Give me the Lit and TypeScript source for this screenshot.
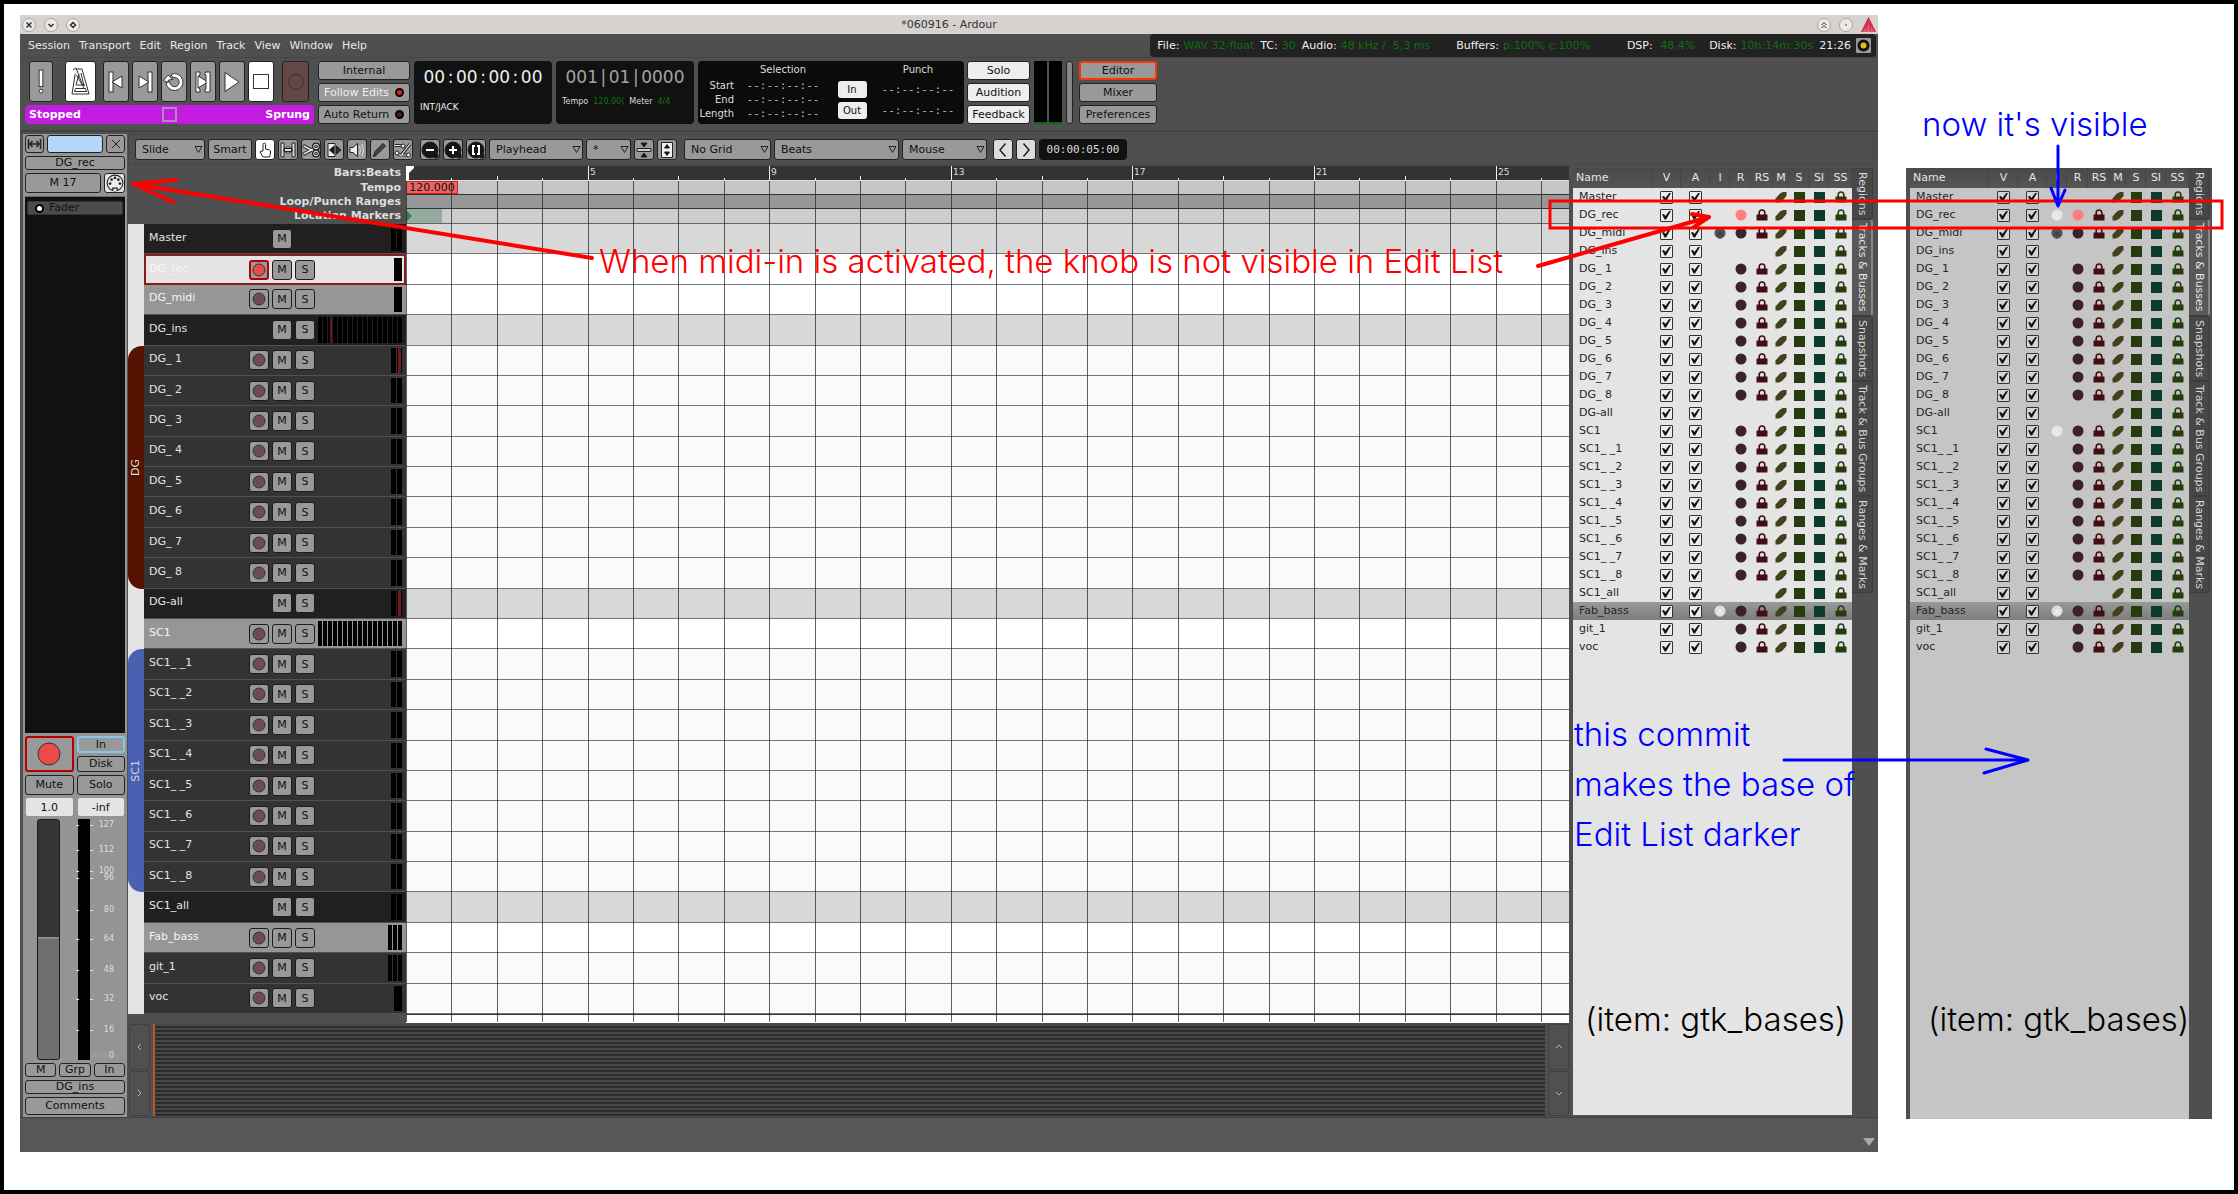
import { LitElement, html, css, svg, nothing } from "lit";
import { customElement, property } from "lit/decorators.js";
import { classMap } from "lit/directives/class-map.js";

type Kind = "bus" | "track" | "selected" | "armed";

interface Track {
  name: string;
  kind: Kind;
  bars: number;
  hot?: number;
  midi?: "light" | "dark";
}

const numbered = (prefix: string): Track[] =>
  Array.from({ length: 8 }, (_, i) => ({ name: `${prefix}${i + 1}`, kind: "track" as Kind, bars: 2 }));

const dgTracks = numbered("DG_ ");
dgTracks[0].hot = 1;

const TRACKS: Track[] = [
  { name: "Master", kind: "bus", bars: 2 },
  { name: "DG_rec", kind: "armed", bars: 1, midi: "light" },
  { name: "DG_midi", kind: "selected", bars: 1, midi: "dark" },
  { name: "DG_ins", kind: "bus", bars: 17, hot: 2 },
  ...dgTracks,
  { name: "DG-all", kind: "bus", bars: 2, hot: 1 },
  { name: "SC1", kind: "selected", bars: 17, midi: "light" },
  ...numbered("SC1_ _"),
  { name: "SC1_all", kind: "bus", bars: 2 },
  { name: "Fab_bass", kind: "selected", bars: 3, midi: "light" },
  { name: "git_1", kind: "track", bars: 3 },
  { name: "voc", kind: "track", bars: 1 },
];

const BAR_WIDTH = 45.4;
const BARS = Array.from({ length: 26 }, (_, i) => i);
const barX = (i: number) => Math.round(i * BAR_WIDTH);

const SCALE: [string, number][] = [
  ["127", 1], ["112", 11], ["100", 20], ["96", 23], ["80", 36],
  ["64", 48], ["48", 61], ["32", 73], ["16", 86],
];

const midiPlug = (body: string, ink: string) => svg`
  <circle cx="8" cy="8" r="7" fill=${body} stroke=${ink}></circle>
  <path d="M6 15v-2.500h4V15" fill=${body} stroke=${ink}></path>
  <g fill=${ink}><circle cx="3.600" cy="8.500" r="1.200"></circle><circle cx="5" cy="5" r="1.200"></circle>
  <circle cx="8" cy="3.500" r="1.200"></circle><circle cx="11" cy="5" r="1.200"></circle>
  <circle cx="12.400" cy="8.500" r="1.200"></circle></g>`;

@customElement("edit-list")
export class EditList extends LitElement {
  @property({ type: Boolean, reflect: true }) dark = false;

  static styles = css`
    :host {
      display: grid;
      grid-template-columns: 279px 1fr;
      box-sizing: border-box;
      padding-left: 4px;
      background: #4f4f4f;
      font: 11px/18px "DejaVu Sans", sans-serif;
      --base: #e4e4e4;
    }
    :host([dark]) { --base: #c5c5c5; }
    .list { background: var(--base); }
    table { border-collapse: collapse; table-layout: fixed; width: 100%; }
    th, td { padding: 0; text-align: center; font-weight: normal; height: 18px; line-height: 16px; }
    th {
      height: 20px;
      color: #e6e6e6;
      background: linear-gradient(#4a4a4a, #555);
      box-shadow: inset -1px 0 #474747;
    }
    th:first-child { text-align: left; padding-left: 3px; }
    td:first-child { text-align: left; padding-left: 6px; white-space: pre; color: #262626; }
    tr.current td { background: linear-gradient(#999, #7d7d7d); }
    .name { width: 79px; } .check { width: 29px; } .in { width: 20px; } .rec { width: 21px; }
    .safe { width: 22px; } .mute { width: 16px; } .solo { width: 20px; } .ss { width: 23px; }
    input {
      appearance: none;
      display: block;
      box-sizing: border-box;
      width: 13px;
      height: 13px;
      margin: 0 auto;
      border: 1px solid #333;
      border-radius: 1px;
      background: #ececec;
    }
    :host([dark]) input { background: #d4d4d4; }
    input:checked::before {
      content: "";
      display: block;
      width: 9px;
      height: 9px;
      margin: 1px;
      background: #111;
      clip-path: polygon(0 45%, 22% 40%, 38% 62%, 85% 0, 100% 5%, 45% 100%, 30% 100%);
    }
    svg { display: block; margin: 0 auto; }
    .tabs { display: flex; flex-direction: column; align-items: flex-start; }
    .tab {
      writing-mode: vertical-rl;
      width: 21px;
      margin: 0;
      padding: 3px 0;
      border: 1px solid #3d3d3d;
      border-left: 0;
      border-radius: 0 3px 3px 0;
      background: #474747;
      color: #d6d6d6;
      font: inherit;
      line-height: 18px;
      text-align: left;
    }
    .tab.active { background: #585858; border-right: 2px solid #888; color: #e6e6e6; }
  `;

  private row(t: Track) {
    const bus = t.kind === "bus";
    return html`<tr class=${t.name === "Fab_bass" ? "current" : ""}>
      <td>${t.name}</td>
      <td><input type="checkbox" checked aria-label="${t.name} visible"></td>
      <td><input type="checkbox" checked aria-label="${t.name} active"></td>
      <td>${t.midi
        ? html`<svg width="12" height="12" viewBox="0 0 16 16">${t.midi === "dark"
            ? midiPlug("#444", "#666")
            : midiPlug(!this.dark && t.name !== "Fab_bass" ? "#e6e6e6" : "#ebebeb", t.name === "Fab_bass" ? "#d0d0d0" : "#e2e2e2")}</svg>`
        : nothing}</td>
      <td>${bus ? nothing : html`<svg width="12" height="12"><circle cx="6" cy="6" r="5.500"
        fill=${t.kind === "armed" ? "#ff7d7d" : "#3b2224"}></circle></svg>`}</td>
      <td>${bus ? nothing : this.lock("#430e12")}</td>
      <td><svg width="12" height="12"><path d="M.5 11.500V7.500L5 2.500l3-1.500h3.500v4L7 10l-3 1.500z" fill="#443f1c"></path></svg></td>
      <td><svg width="11" height="11"><rect width="11" height="11" fill="#273c0e"></rect></svg></td>
      <td><svg width="11" height="11"><rect width="11" height="11" fill="#0c3b2a"></rect></svg></td>
      <td>${this.lock("#273c0e")}</td>
    </tr>`;
  }

  private lock(color: string) {
    return html`<svg width="12" height="12"><path d="M3.200 6V3.800a2.800 2.800 0 0 1 5.600 0V6" fill="none"
      stroke=${color} stroke-width="1.600"></path><rect x=".5" y="5.500" width="11" height="6" fill=${color}></rect></svg>`;
  }

  render() {
    return html`
      <div class="list">
        <table>
          <colgroup>
            <col class="name"><col class="check"><col class="check"><col class="in"><col class="rec">
            <col class="safe"><col class="mute"><col class="solo"><col class="solo"><col class="ss">
          </colgroup>
          <thead><tr>${["Name", "V", "A", "I", "R", "RS", "M", "S", "SI", "SS"].map(
            (h) => html`<th scope="col">${h}</th>`)}</tr></thead>
          <tbody>${TRACKS.map((t) => this.row(t))}</tbody>
        </table>
      </div>
      <nav class="tabs" role="tablist">
        ${["Regions", "Tracks & Busses", "Snapshots", "Track & Bus Groups", "Ranges & Marks"].map(
          (t, i) => html`<button role="tab" aria-selected=${i === 1} class=${classMap({ tab: true, active: i === 1 })}>${t}</button>`)}
      </nav>`;
  }
}

@customElement("track-row")
export class TrackRow extends LitElement {
  @property({ attribute: false }) track!: Track;

  static styles = css`
    :host { display: grid; grid-template-columns: 262px 1fr; min-height: 0; font: 11px "DejaVu Sans", sans-serif; }
    .head {
      display: grid;
      grid-template-columns: 97px 20px 20px 20px 1fr;
      column-gap: 3px;
      align-items: center;
      box-sizing: border-box;
      padding: 0 4px 0 5px;
      border-bottom: 1px solid #505050;
      color: #e4e4e4;
      background: #333;
    }
    .bus { background: #202020; }
    .selected { background: #969696; color: #f4f4f4; }
    .armed { background: #e4e4e4; color: #f6f6f6; border: 2px solid #8c1c1c; padding: 0 2px 0 3px; }
    .name { white-space: pre; padding-bottom: 3px; }
    button {
      display: grid;
      place-items: center;
      box-sizing: border-box;
      width: 20px;
      height: 20px;
      padding: 0;
      border: 1px solid #1c1c1c;
      border-radius: 3px;
      background: #999;
      color: #111;
      font: inherit;
    }
    .rec.on { border: 2px solid #b60000; }
    .mute { grid-column: 3; }
    .solo { grid-column: 4; }
    .meters { grid-column: 5; display: flex; justify-content: flex-end; gap: 1px; align-self: stretch; padding: 2px 0; }
    .meter { width: 4px; background: #000; }
    .meters.one .meter { width: 8px; }
    .meters.two .meter { width: 5px; }
    .meter.hot { background: linear-gradient(90deg, #000 1px, #7a1520 1px, #7a1520 4px, #000 4px); }
    .meters.many .meter.hot { background: linear-gradient(90deg, #000 2px, #6a121c 2px); }
    .lane { border-bottom: 1px solid #777; background: #fafafa; }
    .lane.bus { background: #d8d8d8; }
    .lane.selected, .lane.armed { background: #fff; border: 0; border-bottom: 1px solid #777; padding: 0; }
  `;

  render() {
    const t = this.track;
    const bars = Array.from({ length: t.bars }, (_, i) => i);
    return html`
      <div class="head ${t.kind}">
        <span class="name">${t.name}</span>
        ${t.kind === "bus" ? nothing : html`<button class=${classMap({ rec: true, on: t.kind === "armed" })} aria-label="Record ${t.name}">
          <svg width="14" height="14"><circle cx="7" cy="7" r="6" fill=${t.kind === "armed" ? "#ec4a4a" : "#6c4c4e"} stroke="#333"></circle></svg>
        </button>`}
        <button class="mute">M</button>
        ${t.name === "Master" ? nothing : html`<button class="solo">S</button>`}
        <div class=${classMap({ meters: true, one: t.bars === 1, two: t.bars === 2, many: t.bars > 3 })}>
          ${bars.map((i) => html`<div class=${classMap({ meter: true, hot: i === t.hot })}></div>`)}
        </div>
      </div>
      <div class="lane ${t.kind}"></div>`;
  }
}

@customElement("app-root")
export class AppRoot extends LitElement {
  static styles = css`
    :host { display: block; font: 11px/14px "DejaVu Sans", sans-serif; color: #111; }
    .page {
      position: relative;
      display: flex;
      gap: 28px;
      box-sizing: border-box;
      min-height: 100vh;
      padding: 11px 22px 38px 16px;
      border: 4px solid #000;
      background: #fff;
    }
    .window { flex: 1; min-width: 0; display: flex; flex-direction: column; background: #4f4f4f; }
    .after { width: 306px; margin: 153px 0 33px; }
    button, select { font: inherit; color: inherit; margin: 0; }
    button {
      display: flex;
      align-items: center;
      justify-content: center;
      box-sizing: border-box;
      padding: 0;
      border: 1px solid #222;
      border-radius: 3px;
      background: #999;
      white-space: nowrap;
    }
    svg { display: block; }

    .title { display: grid; grid-template-columns: 1fr auto 1fr; align-items: center; height: 19px; padding: 0 2px; background: #d6d2cf; color: #333; }
    .title .group { display: flex; gap: 8px; align-items: center; }
    .title .group.right { justify-content: flex-end; }
    .title button { width: 14px; height: 14px; border: 1px solid #aaa6a3; border-radius: 50%; background: #eceae8; }

    .menubar { display: flex; justify-content: space-between; height: 23px; color: #e8e8e8; }
    .menus { display: flex; align-items: center; gap: 9px; padding-left: 8px; }
    .menus button { border: 0; background: none; }
    .status { display: flex; align-items: center; margin-right: 2px; padding: 0 4px 0 7px; border-radius: 4px; background: #222; color: #eee; gap: 4px; white-space: pre; }
    .status .val { color: #0b700b; margin-right: 2px; }
    .status .val.wide { margin-right: 22px; }
    .status .val.wider { margin-right: 33px; }
    .status .val.load { margin-right: 10px; }
    .led { width: 17px; height: 17px; border-radius: 2px; }

    .transport { display: flex; height: 64px; padding: 3px 5px 6px; border-top: 1px solid #444; box-shadow: inset 0 -1px #444; gap: 4px; }
    .tp { display: flex; flex-direction: column; width: 289px; gap: 3px; }
    .tpbtns { display: flex; gap: 3px; padding-left: 4px; padding-right: 5px; }
    .tpbtns button { width: 26px; height: 41px; }
    .tpbtns .panic { width: 24px; margin-right: 9px; }
    .tpbtns .click { width: 31px; margin-right: 4px; }
    .tpbtns .white { background: #fff; }
    .tpbtns .rec { width: 27px; margin-left: auto; background: #644848; }
    .shuttle { display: grid; grid-template-columns: 1fr 15px 1fr; align-items: center; height: 19px; padding: 0 4px; border-radius: 4px; background: #c31be0; color: #fff; font-weight: bold; }
    .shuttle i { width: 11px; height: 11px; border: 2px solid #b08ab8; }
    .shuttle .end { text-align: right; }
    .stack { display: flex; flex-direction: column; justify-content: space-between; height: 63px; }
    .stack button { height: 19px; }
    .sync { width: 92px; }
    .sync .lit { color: #eee; }
    .dot { width: 5px; height: 5px; margin-left: 6px; border: 2px solid #000; border-radius: 50%; background: #5a1518; }
    .dot.on { background: #f01818; }
    .clock { display: flex; flex-direction: column; box-sizing: border-box; width: 138px; height: 63px; padding: 4px 6px; border-radius: 4px; background: #111; color: #eee; }
    .clock .digits { font-size: 17px; line-height: 24px; text-align: center; white-space: nowrap; }
    .clock .digits span { display: inline-block; width: 1ch; text-align: center; }
    .clock .dim { color: #a4a4a4; }
    .clock .sub { font-size: 9px; line-height: 12px; margin-top: 12px; }
    .clock .meta { font-size: 8px; line-height: 12px; margin-top: 7px; display: flex; gap: 5px; color: #ddd; }
    .clock .meta b { font-weight: normal; color: #0b7a0b; }
    .range { display: grid; grid-template-columns: 36px 90px 40px 84px; grid-template-rows: 16px 1fr; column-gap: 4px; box-sizing: border-box; height: 63px; padding: 2px 4px 3px 0; border-radius: 4px; background: #0b0b0b; color: #ddd; font-size: 10px; line-height: 14px; }
    .range .h { text-align: center; }
    .range .col { display: flex; flex-direction: column; justify-content: space-around; }
    .range .right { text-align: right; }
    .range .center { align-items: center; }
    .range .time { font-family: "DejaVu Sans Mono", monospace; font-size: 11px; text-align: center; color: #bbb; }
    .range button { width: 29px; height: 17px; background: #eee; color: #111; border: 0; }
    .alerts { width: 63px; margin-left: -1px; }
    .alerts button { background: #eee; }
    .dsp { display: flex; gap: 2px; height: 63px; }
    .dsp i { width: 13px; background: linear-gradient(#000 61px, #0b6a0b 61px); }
    .dsp i.bar { width: 5px; margin-left: 2px; border: 1px solid #222; border-radius: 3px; background: #888; }
    .pages { width: 78px; margin-left: 2px; }
    .pages .on { border: 2px solid #ff3400; }

    .body { flex: 1; display: flex; padding-top: 2px; border-top: 1px solid #3f3f3f; }
    .strip { display: flex; flex-direction: column; gap: 3px; box-sizing: border-box; width: 104px; margin: 0 1px 0 3px; padding: 1px 2px 2px; background: #949494; }
    .line { display: flex; gap: 3px; }
    .line > button { flex: 1; height: 14px; }
    .line.a > button { height: 18px; }
    .line.a > .sm { flex: 0 0 19px; }
    .line.a > .color { background: #b4d8fa; }
    .line.b > button { height: 20px; }
    .line.b > .midi { flex: 0 0 21px; background: #e6e6e6; }
    .procs { flex: 1; padding: 4px 2px; border-top: 1px solid #666; background: #111; }
    .proc { display: flex; align-items: center; gap: 5px; height: 12px; padding-left: 7px; border: 1px solid #333; border-radius: 2px; background: #4b4b4b; color: #111; }
    .proc i { width: 5px; height: 5px; border: 2px solid #000; border-radius: 50%; background: #fff; }
    .recgrid { display: grid; grid-template-columns: 1fr 1fr; grid-template-rows: 17px 16px; gap: 3px; }
    .recgrid .rec { grid-row: span 2; border: 2px solid #b60000; }
    .recgrid .in { border: 2px solid #86c8ec; }
    .line input { flex: 1; min-width: 0; box-sizing: border-box; height: 18px; margin: 0 1px; padding: 0; border: 0; border-radius: 2px; background: #e4e4e4; color: #111; font: inherit; text-align: center; }
    .gain { position: relative; display: flex; height: 241px; padding-left: 12px; }
    .gain .fader { box-sizing: border-box; width: 23px; border: 1px solid #1c1c1c; border-radius: 3px; background: linear-gradient(#353535 49%, #9a9a9a 49%, #6e6e6e 50%); }
    .gain .meter { width: 12px; margin-left: 18px; background: #000; }
    .gain .mark { position: absolute; right: 11px; width: 38px; color: #dedede; font-size: 8px; line-height: 8px; text-align: right; }
    .gain .mark::before { content: ""; position: absolute; z-index: 0; left: 0; top: 4px; width: 17px; height: 1px; background: linear-gradient(90deg, #e6e6e6 3px, transparent 3px, transparent 14px, #e6e6e6 14px); }
    .gain .zero { position: absolute; right: 11px; bottom: 0; font-size: 8px; line-height: 8px; color: #dedede; }
    .gain .zero span { color: #a6a6a6; }

    .editor { flex: 1; min-width: 0; display: flex; flex-direction: column; }
    .tools { display: flex; align-items: center; gap: 3px; height: 31px; box-sizing: border-box; margin-right: 4px; padding-left: 6px; border: 1px solid #454545; }
    .tools button { width: 20px; height: 21px; }
    .tools .smart { width: 44px; }
    .tools .on { background: #fff; }
    .tools .light { background: #ddd; }
    .tools .sp { margin-left: 1px; }
    .pick { position: relative; display: block; }
    .pick select { appearance: none; box-sizing: border-box; width: 100%; height: 21px; padding: 0 18px 0 6px; border: 1px solid #222; border-radius: 3px; background: #999; }
    .pick svg { position: absolute; right: 2px; top: 6px; pointer-events: none; }
    .w1 { width: 70px; } .w2 { width: 94px; } .w3 { width: 45px; } .w4 { width: 87px; } .w5 { width: 125px; } .w6 { width: 85px; }
    .nudge { box-sizing: border-box; width: 88px; height: 21px; border-radius: 4px; background: #111; color: #ddd; font: 11px/21px "DejaVu Sans Mono", monospace; text-align: center; }

    .main { flex: 1; display: flex; margin-top: 1px; }
    .timeline { position: relative; flex: 1; min-width: 0; display: grid; grid-template-columns: minmax(0, 1fr); grid-template-rows: 58px 1fr 9px 94px; }
    .rulers { display: grid; grid-template-columns: 278px 1fr; grid-template-rows: 15px 14px 14px 15px; }
    .rulers .label { padding-right: 5px; color: #ddd; font-weight: bold; text-align: right; }
    .rulers .r1 { position: relative; background: #333; box-shadow: inset 0 -1px #ddd; }
    .rulers .r2 { background: #c5c5c5; border-bottom: 1px solid #333; }
    .rulers .r3 { background: #979797; border-bottom: 1px solid #333; }
    .rulers .r4 { background: #cdcdcd; border-bottom: 1px solid #666; }
    .tempo { display: block; width: 52px; height: 13px; box-sizing: border-box; border: 1px solid #d61c1c; background: #ea6464; line-height: 11px; text-align: center; color: #111; }
    .marker { display: block; width: 36px; height: 14px; background: #93aa9e; }
    .tick { fill: #eee; }
    .rulers text { font-size: 9px; fill: #ddd; }
    .tracks { display: grid; grid-template-columns: 16px 1fr; grid-auto-rows: minmax(0, 1fr); background: #e4e4e4; }
    .tracks track-row { grid-column: 2; }
    .grp { grid-column: 1; display: flex; align-items: center; justify-content: center; border-radius: 14px 0 0 14px; color: #ddd; writing-mode: vertical-rl; }
    .grp span { transform: rotate(180deg); }
    .dg { grid-row: 5 / 13; background: #561200; }
    .sc { grid-row: 15 / 23; background: #4961b0; }
    .tail { margin-left: 278px; background: #fff; border-top: 1px solid #333; }
    .grid { position: absolute; left: 278px; top: 15px; width: calc(100% - 278px); height: calc(100% - 110px); pointer-events: none; }
    .grid rect { fill: #222; fill-opacity: .72; }
    .summary { display: grid; grid-template-columns: 21px 1fr 21px; gap: 3px; padding: 1px 0 1px 1px; }
    .summary .nav { display: flex; flex-direction: column; gap: 1px; }
    .summary .nav button { flex: 1; border: 1px solid #404040; background: #505050; color: #bbb; }
    .summary .view { border-left: 2px solid #c9502c; background: repeating-linear-gradient(#464646 0, #464646 2px, #2c2c2c 2px, #2c2c2c 4px); }
    .main edit-list { width: 309px; margin: 2px 0; }
    .footer { display: flex; justify-content: flex-end; align-items: flex-end; height: 34px; padding: 0 3px 0 0; border-top: 1px solid #3f3f3f; background: #575757; }
    .footer svg { margin-bottom: 6px; }

    .marks { position: absolute; inset: -4px 0 0 -4px; width: calc(100% + 8px); height: calc(100% + 8px); pointer-events: none; fill: none; stroke-linecap: round; stroke-linejoin: round; }
    .red { stroke: #f00; stroke-width: 4; }
    .box { stroke: #f00; stroke-width: 3; stroke-linejoin: miter; }
    .blue { stroke: #00f; stroke-width: 3; }
    .note { position: absolute; margin: 0; font: 300 33px/50px Inter, sans-serif; white-space: nowrap; }
    .n1 { left: 595px; top: 232px; color: #f00; }
    .n2 { left: 1570px; top: 705px; color: #00f; white-space: pre; }
    .n3 { left: 1581px; top: 990px; color: #000; }
    .n4 { left: 1924px; top: 990px; color: #000; }
    .n5 { left: 1918px; top: 95px; color: #00f; }
  `;

  private pick(label: string, value: string, width: string) {
    return html`<label class="pick ${width}"><select aria-label=${label}><option>${value}</option></select>
      <svg width="9" height="9"><path d="M1 1.500h7L4.500 7.500z" fill="none" stroke="#222"></path></svg></label>`;
  }

  private time(parts: string[], sep: string) {
    return parts.map((p, i) => html`${i ? html`<span>${sep}</span>` : nothing}${p}`);
  }

  private tp(cls: string, label: string, body: unknown) {
    return html`<button class=${cls} aria-label=${label}>
      <svg width="24" height="39" viewBox="0 0 24 39" fill="#fff" stroke="#333">${body}</svg></button>`;
  }

  private tool(cls: string, label: string, body: unknown) {
    return html`<button class=${cls} aria-label=${label}>
      <svg width="18" height="18" viewBox="0 0 18 18" fill="none" stroke="#222">${body}</svg></button>`;
  }

  private lens(label: string, body: unknown) {
    return this.tool("", label, svg`<path d="M12 13l5 0v4h-4z" fill="#111"></path><circle cx="9" cy="9" r="8" fill="#151515"></circle><g stroke="#fff" stroke-width="2">${body}</g>`);
  }

  private renderTransport() {
    return html`<section class="transport">
      <div class="tp">
        <div class="tpbtns">
          ${this.tp("panic", "Panic", svg`<rect x="10" y="7" width="4" height="18"></rect><circle cx="12" cy="30" r="2"></circle>`)}
          ${this.tp("click white", "Metronome", svg`<path d="M7 7h6l7 25H3z"></path><path d="M7.500 13L15 26M12 11l3 13M10 12l-3 11h9M4 8l3-2 7 18"></path><path d="M6.500 26.500h10l1 3h-12z"></path>`)}
          ${this.tp("", "Go to start", svg`<rect x="5" y="10" width="4" height="20"></rect><path d="M8 20l10-6v12z"></path>`)}
          ${this.tp("", "Go to end", svg`<rect x="15" y="10" width="4" height="20"></rect><path d="M16 20L6 14v12z"></path>`)}
          ${this.tp("", "Loop", svg`<path d="M4 20a8.500 8.500 0 1 0 5-7.700l1.800 3.600a4.600 4.600 0 1 1-2.800 4.100z"></path><path d="M1.500 18.500L6 13l5 4.500-4.500.5-1 2.500z"></path>`)}
          ${this.tp("", "Play selection", svg`<path d="M5 10h4v3H8v14h1v3H5z"></path><path d="M7 14l10 6-10 6z"></path><path d="M19 10h-5v3h1v14h-1v3h5z"></path>`)}
          ${this.tp("", "Play", svg`<path d="M5 10.500L19 20 5 29.500z"></path>`)}
          ${this.tp("white", "Stop", svg`<rect x="4.500" y="12.500" width="15" height="14"></rect>`)}
          ${this.tp("rec", "Record", svg`<circle cx="12" cy="20" r="7.500" fill="#644848"></circle>`)}
        </div>
        <div class="shuttle"><span>Stopped</span><i></i><span class="end">Sprung</span></div>
      </div>
      <div class="stack sync">
        <button>Internal</button>
        <button class="lit">Follow Edits<i class="dot on"></i></button>
        <button>Auto Return<i class="dot"></i></button>
      </div>
      <div class="clock"><div class="digits">${this.time(["00", "00", "00", "00"], ":")}</div><div class="sub">INT/JACK</div></div>
      <div class="clock"><div class="digits dim">${this.time(["001", "01", "0000"], "|")}</div>
        <div class="meta"><span>Tempo</span><b>120.00(</b><span>Meter</span><b>4/4</b></div></div>
      <div class="range">
        <span></span><span class="h">Selection</span><span></span><span class="h">Punch</span>
        <div class="col right"><span>Start</span><span>End</span><span>Length</span></div>
        <div class="col time"><span>--:--:--:--</span><span>--:--:--:--</span><span>--:--:--:--</span></div>
        <div class="col center"><button>In</button><button>Out</button></div>
        <div class="col time"><span>--:--:--:--</span><span>--:--:--:--</span></div>
      </div>
      <div class="stack alerts"><button>Solo</button><button>Audition</button><button>Feedback</button></div>
      <div class="dsp"><i></i><i></i><i class="bar"></i></div>
      <div class="stack pages"><button class="on">Editor</button><button>Mixer</button><button>Preferences</button></div>
    </section>`;
  }

  private renderStrip() {
    return html`<aside class="strip">
      <div class="line a">
        <button class="sm" aria-label="Strip width"><svg width="15" height="12" fill="none" stroke="#222" stroke-width="1.500"><path d="M1.500 1v10M13.500 1v10M3 6h9M5.500 3L3 6l2.500 3M9.500 3L12 6 9.500 9"></path></svg></button>
        <button class="color" aria-label="Color"></button>
        <button class="sm" aria-label="Hide"><svg width="12" height="12" stroke="#222"><path d="M2 2l8 8M10 2l-8 8"></path></svg></button>
      </div>
      <div class="line"><button>DG_rec</button></div>
      <div class="line b"><button>M 17</button><button class="midi" aria-label="MIDI input"><svg width="18" height="18" viewBox="0 0 16 16">${midiPlug("#eee", "#222")}</svg></button></div>
      <div class="procs"><div class="proc"><i></i>Fader</div></div>
      <div class="recgrid">
        <button class="rec" aria-label="Record"><svg width="24" height="24"><circle cx="12" cy="12" r="11" fill="#ec4a4a" stroke="#333"></circle></svg></button>
        <button class="in">In</button><button>Disk</button>
      </div>
      <div class="line b"><button>Mute</button><button>Solo</button></div>
      <div class="line"><input aria-label="Gain" value="1.0"><input aria-label="Peak" value="-inf"></div>
      <div class="gain"><div class="fader"></div><div class="meter"></div>
        ${SCALE.map(([n, top]) => html`<span class="mark" style="top:${top}%">${n}</span>`)}
        <span class="zero"><span>midi</span>0</span>
      </div>
      <div class="line"><button>M</button><button>Grp</button><button>In</button></div>
      <div class="line"><button>DG_ins</button></div>
      <div class="line a"><button>Comments</button></div>
    </aside>`;
  }

  private renderTools() {
    return html`<div class="tools">
      ${this.pick("Edit mode", "Slide", "w1")}
      <button class="smart">Smart</button>
      ${this.tool("on", "Grab", svg`<path d="M7 10V3.500a1.300 1.300 0 0 1 2.600 0V8l4 1q1 .5 1 2l-1 5H7l-3-5q.5-1.500 2-.8z" fill="#fff"></path>`)}
      ${this.tool("", "Range", svg`<path d="M2 2h3v14H2zM13 2h3v14h-3z" fill="#ddd"></path><path d="M5 7.500h8v3H5z" fill="#ddd"></path><path d="M8 5.500L5 9l3 3.500M10 5.500L13 9l-3 3.500"></path>`)}
      ${this.tool("", "Cut", svg`<path d="M1 4.500l11 6M1 13.500l11-6" stroke-width="3.500"></path><path d="M1.500 4.800l10.500 5.700M1.500 13.200l10.500-5.700" stroke="#eee" stroke-width="1.500"></path><circle cx="14" cy="5.500" r="2.500" fill="#999" stroke="#222" stroke-width="3"></circle><circle cx="14" cy="12.500" r="2.500" fill="#999" stroke="#222" stroke-width="3"></circle><circle cx="14" cy="5.500" r="2.300" stroke="#eee"></circle><circle cx="14" cy="12.500" r="2.300" stroke="#eee"></circle>`)}
      ${this.tool("", "Stretch", svg`<path d="M3 2.500h7v13H3z" fill="#eee"></path><path d="M9 5v8L4.500 9z" fill="#111"></path><path d="M11.500 5v8l4.500-4z" fill="#333"></path>`)}
      ${this.tool("", "Audition", svg`<path d="M2 6.500h3l4.500-4v13L5 11.500H2z" fill="#eee"></path><path d="M11.500 5q2 4 0 8M14 3q3 6 0 12" stroke="#ddd"></path>`)}
      ${this.tool("", "Draw", svg`<path d="M2.500 15.500l1.500-5 8-8 2.500 2.500-8 8z" fill="#444"></path><path d="M2.500 15.500l3-1"></path>`)}
      ${this.tool("", "Edit contents", svg`<path d="M1 4.500h8M3 12.500l4 2M7 14.500L16 3M8 14h8" stroke="#222" stroke-width="3"></path><path d="M1 4.500h8M3 12.500l4 2M7 14.500L16 3M8 14h8" stroke="#eee" stroke-width="1.200"></path><circle cx="9" cy="5" r="2" fill="#eee"></circle><circle cx="3" cy="12" r="2" fill="#eee"></circle><circle cx="14.500" cy="14" r="2" fill="#eee"></circle>`)}
      <span class="sp"></span>
      ${this.lens("Zoom out", svg`<path d="M5 9h8"></path>`)}
      ${this.lens("Zoom in", svg`<path d="M5 9h8M9 5v8"></path>`)}
      ${this.lens("Zoom to session", svg`<path d="M8 5H6v8h2M10 5h2v8h-2"></path>`)}
      ${this.pick("Zoom focus", "Playhead", "w2")}
      ${this.pick("Visible tracks", "*", "w3")}
      ${this.tool("", "Shrink tracks", svg`<path d="M6 2h6L9 6zM6 16h6l-3-4z" fill="#111"></path><path d="M2 7.500h14v3H2z" fill="#ccc"></path>`)}
      ${this.tool("", "Expand tracks", svg`<path d="M3.500 1.500h11v15h-11z" fill="#f2f2f2"></path><path d="M6.500 7h5L9 3.500zM6.500 11h5L9 14.500z" fill="#111"></path>`)}
      <span class="sp"></span>
      ${this.pick("Grid", "No Grid", "w4")}
      ${this.pick("Snap unit", "Beats", "w5")}
      ${this.pick("Edit point", "Mouse", "w6")}
      <span></span>
      ${this.tool("light", "Nudge back", svg`<path d="M11.500 2.500L6 9l5.500 6.500" stroke-width="1.500"></path>`)}
      ${this.tool("light", "Nudge forward", svg`<path d="M6.500 2.500L12 9l-5.500 6.500" stroke-width="1.500"></path>`)}
      <span class="nudge">00:00:05:00</span>
    </div>`;
  }

  private renderTimeline() {
    return html`<section class="timeline">
      <div class="rulers">
        <span class="label">Bars:Beats</span>
        <div class="r1"><svg width="100%" height="15">
          <path d="M0 0h8v2L3 7v8H0z" fill="#fff"></path>
          ${BARS.slice(1).map((i) => i % 4
            ? svg`<rect class="tick" x=${barX(i)} y=${i % 2 ? 12 : 10} width="1" height="5"></rect>`
            : svg`<rect class="tick" x=${barX(i)} y="0" width="1" height="15"></rect><text x=${barX(i) + 2} y="9">${i + 1}</text>`)}
        </svg></div>
        <span class="label">Tempo</span><div class="r2"><span class="tempo">120.000</span></div>
        <span class="label">Loop/Punch Ranges</span><div class="r3"></div>
        <span class="label">Location Markers</span><div class="r4"><span class="marker"><svg width="8" height="14"><path d="M0 1l6 6-6 6z" fill="#3f7a56"></path></svg></span></div>
      </div>
      <div class="tracks">
        <div class="grp dg"><span>DG</span></div>
        <div class="grp sc"><span>SC1</span></div>
        ${TRACKS.map((t, i) => html`<track-row .track=${t} style="grid-row:${i + 1}"></track-row>`)}
      </div>
      <div class="tail"></div>
      <div class="summary">
        <div class="nav">
          <button aria-label="Left"><svg width="5" height="8" fill="none" stroke="#bbb"><path d="M4 1L1 4l3 3"></path></svg></button>
          <button aria-label="Right"><svg width="5" height="8" fill="none" stroke="#bbb"><path d="M1 1l3 3-3 3"></path></svg></button>
        </div>
        <div class="view"></div>
        <div class="nav">
          <button aria-label="Up"><svg width="8" height="5" fill="none" stroke="#bbb"><path d="M1 4l3-3 3 3"></path></svg></button>
          <button aria-label="Down"><svg width="8" height="5" fill="none" stroke="#bbb"><path d="M1 1l3 3 3-3"></path></svg></button>
        </div>
      </div>
      <svg class="grid">${BARS.map((i) => svg`<rect x=${barX(i)} y="0" width="1" height="100%"></rect>`)}</svg>
    </section>`;
  }

  render() {
    return html`<div class="page">
      <main class="window">
        <header class="title">
          <div class="group">
            <button aria-label="Close"><svg width="8" height="8" stroke="#333" stroke-width="1.500"><path d="M1.500 1.500l5 5M6.500 1.500l-5 5"></path></svg></button>
            <button aria-label="Minimize"><svg width="8" height="8" fill="none" stroke="#333" stroke-width="1.500"><path d="M1.500 3L4 5.500 6.500 3"></path></svg></button>
            <button aria-label="Maximize"><svg width="8" height="8" fill="none" stroke="#333" stroke-width="1.500"><path d="M4 1.500L6.500 4 4 6.500 1.500 4z"></path></svg></button>
          </div>
          <span>*060916 - Ardour</span>
          <div class="group right">
            <button aria-label="Shade"><svg width="8" height="8" fill="none" stroke="#333"><path d="M1.500 4L4 1.500 6.500 4M1.500 7L4 4.500 6.500 7"></path></svg></button>
            <button aria-label="Sticky"><svg width="4" height="4"><circle cx="2" cy="2" r="1" fill="#777"></circle></svg></button>
            <svg width="15" height="15"><path d="M7.500 0L15 15l-3-1-1.500-5-1 6-2-9-2 9-1-5-1.500 4-3 1z" fill="#d8304c"></path><path d="M7.500 0L15 15H0z" fill="#d8304c" fill-opacity=".7"></path></svg>
          </div>
        </header>
        <div class="menubar">
          <nav class="menus">${["Session", "Transport", "Edit", "Region", "Track", "View", "Window", "Help"].map((m) => html`<button>${m}</button>`)}</nav>
          <div class="status">
            <span>File:</span><span class="val">WAV 32-float</span><span>TC:</span><span class="val">30</span>
            <span>Audio:</span><span class="val wide">48 kHz /  5,3 ms</span>
            <span>Buffers:</span><span class="val wider">p:100% c:100%</span>
            <span>DSP: </span><span class="val load">48.4%</span> <span>Disk:</span><span class="val">10h:14m:30s</span><span>21:26</span>
            <button class="led" aria-label="Log"><svg width="13" height="15"><circle cx="6.500" cy="7.500" r="4.500" fill="#e8b820" stroke="#111" stroke-width="3"></circle></svg></button>
          </div>
        </div>
        ${this.renderTransport()}
        <div class="body">
          ${this.renderStrip()}
          <div class="editor">
            ${this.renderTools()}
            <div class="main">${this.renderTimeline()}<edit-list></edit-list></div>
          </div>
        </div>
        <footer class="footer"><svg width="12" height="8"><path d="M0 0h12L6 8z" fill="#aaa"></path></svg></footer>
      </main>
      <edit-list class="after" dark></edit-list>

      <svg class="marks">
        <path class="red" d="M592 258L133 184M176 180L133 184L173 202"></path>
        <path class="red" d="M1538 266L1709 217M1692 214L1709 217L1694 227"></path>
        <rect class="box" x="1550" y="201" width="672" height="27"></rect>
        <path class="blue" d="M2058 146V205M2051 188L2058 206L2065 190"></path>
        <path class="blue" d="M1784 760H2028M1986 749L2028 760L1984 773"></path>
      </svg>
      <p class="note n1">When midi-in is activated, the knob is not visible in Edit List</p>
      <p class="note n2">this commit
makes the base of
Edit List darker</p>
      <p class="note n3">(item: gtk_bases)</p>
      <p class="note n4">(item: gtk_bases)</p>
      <p class="note n5">now it's visible</p>
    </div>`;
  }
}
